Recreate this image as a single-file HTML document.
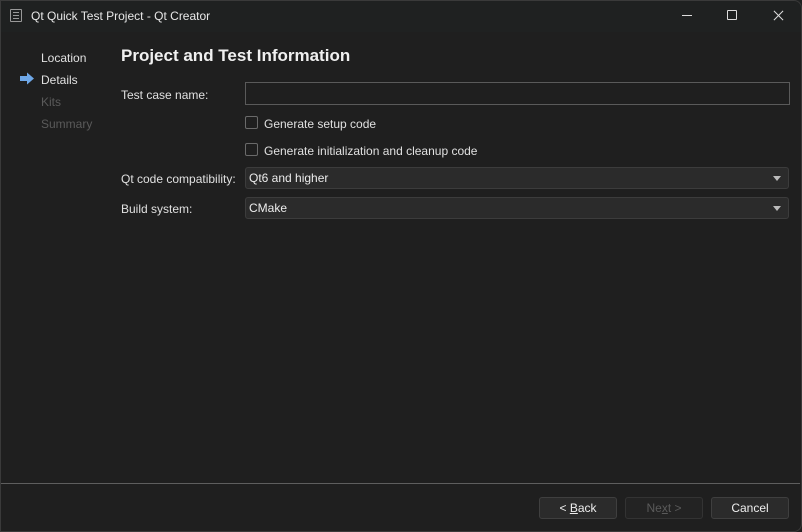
<!DOCTYPE html>
<html><head><meta charset="utf-8"><style>
*{margin:0;padding:0;box-sizing:border-box}
body{width:802px;height:532px;background:#1f1f1f;font-family:"Liberation Sans",sans-serif;font-size:12px;color:#e0e0e0;position:relative;overflow:hidden}
.a{position:absolute;white-space:nowrap}
.frame{position:absolute;left:0;top:0;width:802px;height:532px;border:1px solid #3a3a3a;border-radius:0 8px 8px 0;pointer-events:none}
.title{position:absolute;left:0;top:0;width:802px;height:32px;background:#1f2121}
.box{position:absolute;border:1px solid #5a5a5a;background:#1f1f1f}
.cb{position:absolute;width:13px;height:13px;border:1px solid #6a6a6a;border-radius:2px}
.combo{position:absolute;height:22px;background:#2b2b2b;border:1px solid #3c3c3c;border-radius:3px;padding-left:3px;line-height:20px;color:#ececec}
.combo:after{content:"";position:absolute;right:7px;top:8px;border-left:4px solid transparent;border-right:4px solid transparent;border-top:5px solid #bbb}
.btn{position:absolute;top:497px;width:78px;height:22px;background:#2b2b2b;border:1px solid #3f3f3f;border-radius:3px;text-align:center;line-height:20px;color:#eee}
</style></head><body>
<div class="title"></div>
<div class="a" style="left:10px;top:9px;width:12px;height:13px;border:1px solid #999;border-radius:1px"></div>
<div class="a" style="left:13px;top:12px;width:6px;height:1px;background:#999;box-shadow:0 3px #999,0 6px #999"></div>
<div class="a" style="left:31px;top:9px;color:#e8e8e8">Qt Quick Test Project - Qt Creator</div>
<div class="a" style="left:682px;top:15px;width:10px;height:1px;background:#ddd"></div>
<div class="a" style="left:727px;top:10px;width:10px;height:10px;border:1px solid #ddd;border-radius:1px"></div>
<div class="a" style="left:772px;top:15px;width:13px;height:1px;background:#ddd;transform:rotate(45deg)"></div>
<div class="a" style="left:772px;top:15px;width:13px;height:1px;background:#ddd;transform:rotate(-45deg)"></div>

<div class="a" style="left:41px;top:51px">Location</div>
<svg class="a" style="left:19px;top:72px" width="16" height="13"><path d="M1 4h7V0.5L15 6.5 8 12.5V9H1z" fill="#6fa8e8"/></svg>
<div class="a" style="left:41px;top:73px">Details</div>
<div class="a" style="left:41px;top:95px;color:#5a5a5a">Kits</div>
<div class="a" style="left:41px;top:117px;color:#5a5a5a">Summary</div>

<div class="a" style="left:121px;top:46px;font-size:17px;font-weight:bold;color:#f0f0f0">Project and Test Information</div>
<div class="a" style="left:121px;top:88px">Test case name:</div>
<div class="box" style="left:245px;top:82px;width:545px;height:23px"></div>
<div class="cb" style="left:245px;top:116px"></div>
<div class="a" style="left:264px;top:117px">Generate setup code</div>
<div class="cb" style="left:245px;top:143px"></div>
<div class="a" style="left:264px;top:144px">Generate initialization and cleanup code</div>
<div class="a" style="left:121px;top:172px">Qt code compatibility:</div>
<div class="combo" style="left:245px;top:167px;width:544px">Qt6 and higher</div>
<div class="a" style="left:121px;top:202px">Build system:</div>
<div class="combo" style="left:245px;top:197px;width:544px">CMake</div>

<div class="a" style="left:0;top:483px;width:800px;height:1px;background:#5e5e5e"></div>
<div class="btn" style="left:539px">&lt; <u>B</u>ack</div>
<div class="btn" style="left:625px;color:#5a5a5a;background:#232323;border-color:#333">Ne<span style="text-decoration:underline">x</span>t &gt;</div>
<div class="btn" style="left:711px">Cancel</div>
<div class="frame"></div>
</body></html>
